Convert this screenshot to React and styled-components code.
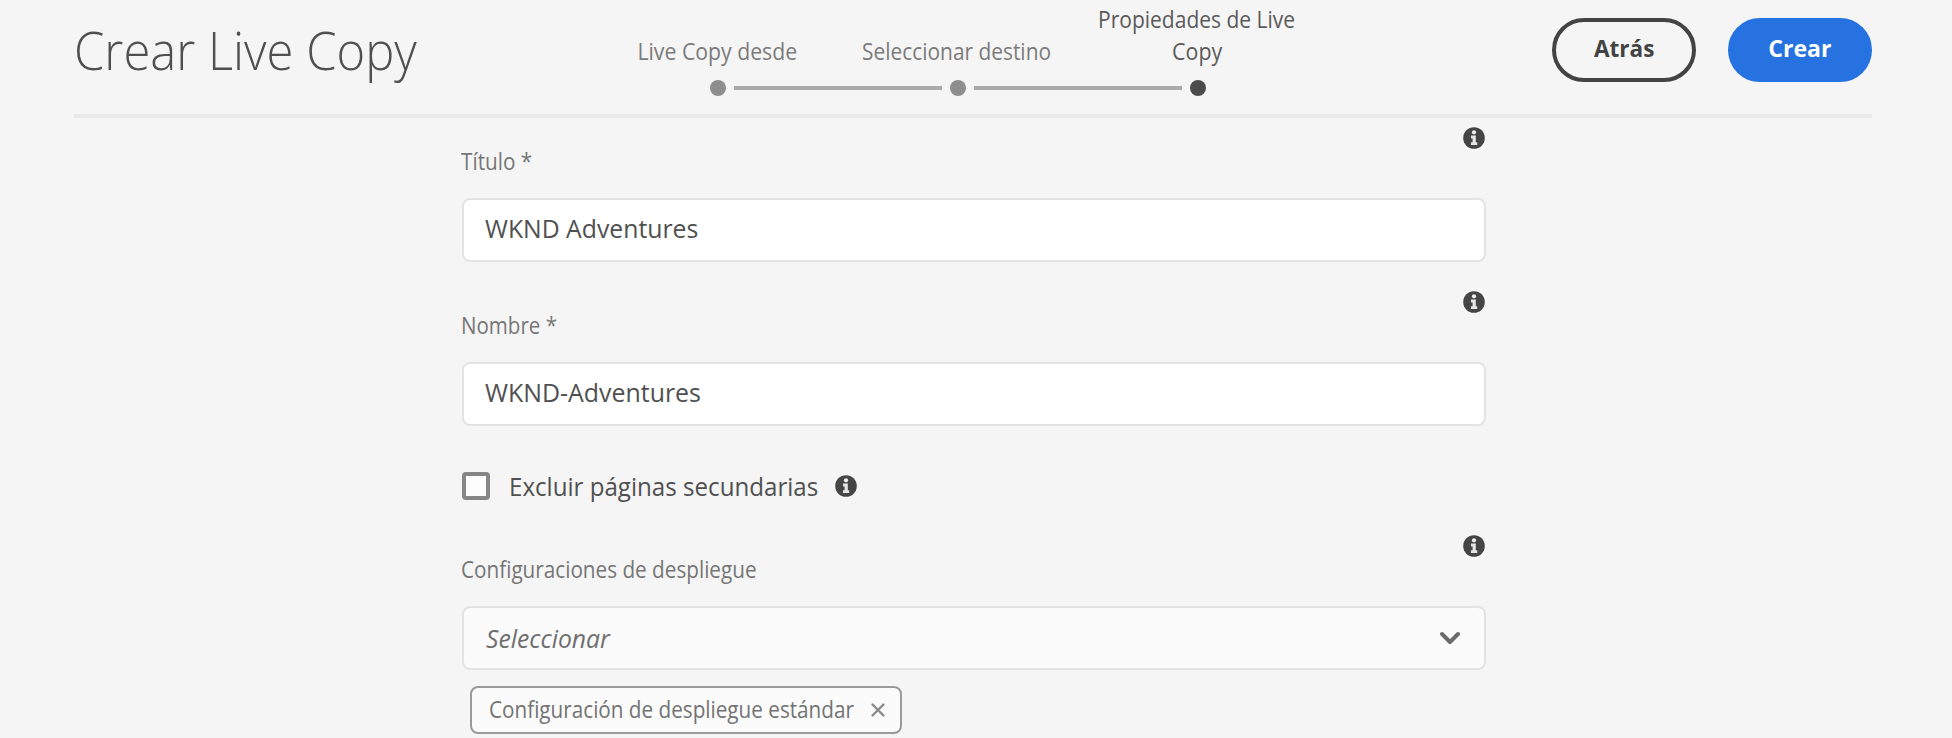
import React from "react";
import styled, { createGlobalStyle } from "styled-components";

const GlobalStyle = createGlobalStyle`
  * { box-sizing: border-box; }
  body {
    margin: 0;
    background: #f5f5f5;
    color: #505050;
    font-family: "Open Sans", "Noto Sans", sans-serif;
    overflow: hidden;
  }
`;

const Page = styled.div`
  height: 738px;
  padding: 0 80px 0 74px;
  overflow: hidden;
`;

/* Narrows the letterforms horizontally */
const Narrow = styled.span`
  display: inline-block;
  white-space: nowrap;
  transform: scaleX(${(p) => p.$scale});
  transform-origin: ${(p) => p.$origin || "left"} center;
`;

const Header = styled.header`
  display: grid;
  grid-template-columns: 524px 720px 1fr;
  height: 118px;
  border-bottom: 4px solid #e9e9e9;
`;

const Title = styled.h1`
  margin: 0;
  padding-top: 13px;
  font-size: 54px;
  line-height: 72px;
  font-weight: 300;
`;

const Steps = styled.ol`
  display: flex;
  margin: 0;
  padding: 0;
  list-style: none;
`;

const Step = styled.li`
  width: 240px;
  color: ${(p) => (p.$active ? "#5a5a5a" : "#7b7b7b")};
`;

const StepLabel = styled.div`
  display: flex;
  flex-direction: column;
  align-items: center;
  justify-content: flex-end;
  width: 238px;
  height: 67px;
  font-size: 24px;
  line-height: 32px;
`;

const Track = styled.div`
  display: flex;
  align-items: center;
  gap: 8px;
  height: 16px;
  margin-top: 13px;
`;

const Line = styled.span`
  flex: 1;
  height: 4px;
  background: ${(p) => (p.$hidden ? "transparent" : "#ababab")};
`;

const Dot = styled.span`
  width: 16px;
  height: 16px;
  border-radius: 50%;
  background: ${(p) => (p.$active ? "#4b4b4b" : "#8e8e8e")};
`;

const Actions = styled.div`
  display: flex;
  justify-content: flex-end;
  gap: 32px;
  padding-top: 18px;
`;

const Button = styled.button`
  display: flex;
  align-items: center;
  justify-content: center;
  width: 144px;
  height: 64px;
  padding: 0 0 5px;
  border: 4px solid ${(p) => (p.$primary ? "#2672e1" : "#434343")};
  border-radius: 32px;
  background: ${(p) => (p.$primary ? "#2672e1" : "transparent")};
  color: ${(p) => (p.$primary ? "#fff" : "#434343")};
  font: 700 24px "Open Sans", sans-serif;
`;

const Form = styled.main`
  width: 1024px;
  margin-left: 388px;
`;

const Field = styled.section`
  height: 164px;
  padding-top: 9px;
`;

const FieldHead = styled.div`
  display: flex;
  justify-content: space-between;
  height: 71px;
`;

const Label = styled.label`
  margin-left: -1px;
  padding-top: 18px;
  color: #767676;
  font-size: 23px;
  line-height: 32px;
`;

const Info = styled.svg`
  flex: none;
  width: 22px;
  height: 22px;
  margin-right: ${(p) => (p.$inline ? 0 : "1px")};
`;

const Input = styled.div`
  display: flex;
  align-items: center;
  height: 64px;
  padding: 0 21px 4px;
  border: 2px solid #e3e3e3;
  border-radius: 8px;
  background: #fff;
  font-size: 26px;
`;

const Select = styled(Input)`
  justify-content: space-between;
  padding: 0 24px 1px 22px;
  background: #fbfbfb;
  color: #6f6f6f;
  font-style: italic;
`;

const CheckRow = styled.div`
  display: flex;
  align-items: center;
  height: 80px;
`;

const Box = styled.span`
  width: 28px;
  height: 28px;
  margin-right: 19px;
  border: 4px solid #868686;
  border-radius: 4px;
  background: #fdfdfd;
`;

const CheckText = styled.span`
  width: 326px;
  font-size: 26px;
  line-height: 32px;
`;

const Chip = styled.div`
  display: flex;
  align-items: center;
  justify-content: space-between;
  width: 432px;
  height: 48px;
  margin: 16px 0 0 8px;
  padding: 0 14px 0 17px;
  border: 2px solid #9a9a9a;
  border-radius: 8px;
  background: #fbfbfb;
  color: #737373;
  font-size: 24px;
`;

const ChipText = styled.span`
  width: 366px;
  padding-bottom: 3px;
`;

const Icon = styled.svg`
  flex: none;
  fill: none;
  stroke: ${(p) => p.$color};
  stroke-linecap: round;
  stroke-linejoin: round;
`;

function InfoIcon({ inline }) {
  return (
    <Info $inline={inline} viewBox="0 0 22 22">
      <circle cx="11" cy="11" r="10.8" fill="#454545" />
      <circle cx="11" cy="5.3" r="2.1" fill="#f0f0f0" />
      <path d="M8 8.6h4.8v6.6h1.4v2.8H8v-2.8h1.6v-3.8H8z" fill="#e6e6e6" />
    </Info>
  );
}

const steps = [
  { lines: [["Live Copy desde", 0.885]] },
  { lines: [["Seleccionar destino", 0.87]] },
  { lines: [["Propiedades de Live", 0.875], ["Copy", 0.89]], active: true },
];

export default function App() {
  return (
    <>
      <GlobalStyle />
      <Page>
        <Header>
          <Title>
            <Narrow $scale={0.906}>Crear Live Copy</Narrow>
          </Title>
          <Steps>
            {steps.map((s, i) => (
              <Step key={i} $active={s.active}>
                <StepLabel>
                  {s.lines.map(([text, scale]) => (
                    <Narrow key={text} $scale={scale} $origin="center">
                      {text}
                    </Narrow>
                  ))}
                </StepLabel>
                <Track>
                  <Line $hidden={i === 0} />
                  <Dot $active={s.active} />
                  <Line $hidden={i === steps.length - 1} />
                </Track>
              </Step>
            ))}
          </Steps>
          <Actions>
            <Button>
              <Narrow $scale={0.94} $origin="center">Atrás</Narrow>
            </Button>
            <Button $primary>
              <Narrow $scale={0.96} $origin="center">Crear</Narrow>
            </Button>
          </Actions>
        </Header>
        <Form>
          <Field>
            <FieldHead>
              <Label><Narrow $scale={0.9}>Título *</Narrow></Label>
              <InfoIcon />
            </FieldHead>
            <Input><Narrow $scale={0.953}>WKND Adventures</Narrow></Input>
          </Field>
          <Field>
            <FieldHead>
              <Label><Narrow $scale={0.893}>Nombre *</Narrow></Label>
              <InfoIcon />
            </FieldHead>
            <Input><Narrow $scale={0.958}>WKND-Adventures</Narrow></Input>
          </Field>
          <CheckRow>
            <Box />
            <CheckText><Narrow $scale={0.928}>Excluir páginas secundarias</Narrow></CheckText>
            <InfoIcon inline />
          </CheckRow>
          <Field>
            <FieldHead>
              <Label><Narrow $scale={0.9}>Configuraciones de despliegue</Narrow></Label>
              <InfoIcon />
            </FieldHead>
            <Select>
              <Narrow $scale={0.95}>Seleccionar</Narrow>
              <Icon $color="#6b6b6b" width="20" height="14" viewBox="0 0 20 14" strokeWidth="4">
                <path d="M2 3l8 8 8-8" />
              </Icon>
            </Select>
            <Chip>
              <ChipText><Narrow $scale={0.862}>Configuración de despliegue estándar</Narrow></ChipText>
              <Icon $color="#8a8a8a" width="16" height="16" viewBox="0 0 16 16" strokeWidth="2.4">
                <path d="M2.5 2.5l11 11M13.5 2.5l-11 11" />
              </Icon>
            </Chip>
          </Field>
        </Form>
      </Page>
    </>
  );
}
